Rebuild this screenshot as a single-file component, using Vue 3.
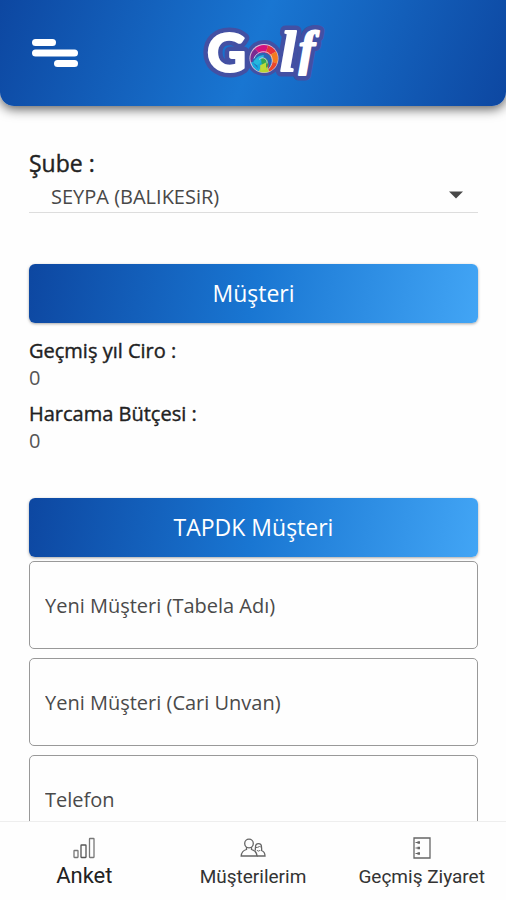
<script setup>
import { ref } from 'vue'

const branch = ref('SEYPA (BALIKESiR)')
const figures = [
  { label: 'Geçmiş yıl Ciro :', value: '0' },
  { label: 'Harcama Bütçesi :', value: '0' },
]
const fields = ref([
  { id: 'tabela', label: 'Yeni Müşteri (Tabela Adı)', type: 'text', value: '' },
  { id: 'unvan', label: 'Yeni Müşteri (Cari Unvan)', type: 'text', value: '' },
  { id: 'telefon', label: 'Telefon', type: 'tel', value: '' },
])
</script>

<template>
  <div class="app">
    <header class="header">
      <button class="menu" type="button" aria-label="Menü">
        <svg width="46" height="28" viewBox="0 0 46 28" fill="#fff">
          <rect x="0" y="0" width="24" height="7" rx="3.5" />
          <rect x="0" y="10.5" width="46" height="7" rx="3.5" />
          <rect x="22" y="21" width="24" height="7" rx="3.5" />
        </svg>
      </button>
      <svg class="logo" width="170" height="100" viewBox="0 0 170 100" role="img" aria-label="Golf">
        <g class="halo">
          <text class="round" x="39" y="69">G</text>
          <circle cx="96" cy="55" r="16" />
          <text class="script tall" x="112" y="68">l</text>
          <text class="script" x="131" y="62">f</text>
        </g>
        <g fill="#fff" stroke="#fff" stroke-width="2" stroke-linejoin="round">
          <text class="round" x="39" y="69">G</text>
          <text class="script tall" x="112" y="68">l</text>
          <text class="script" x="131" y="62">f</text>
        </g>
        <circle cx="96" cy="55.5" r="14.5" fill="#d9c3dc" />
        <g transform="translate(96 55.5)">
          <path d="M0 0L-13 4A14 14 0 0 1-9-10z" fill="#7b2a91" />
          <path d="M0 0L-9-10A14 14 0 0 1 4-13z" fill="#d3127e" />
          <path d="M0 0L4-13A14 14 0 0 1 12-7z" fill="#e8323a" />
          <path d="M0 0L12-7A14 14 0 0 1 13 5z" fill="#f47b20" />
          <path d="M0 0L13 5A14 14 0 0 1 5 13z" fill="#e9472c" />
          <path d="M0 0L5 13A14 14 0 0 1-5 13z" fill="#b8d433" />
          <path d="M0 0L-5 13A14 14 0 0 1-13 4z" fill="#16a9df" />
          <path d="M-12 3C-10-6 1-9 6-3C10 2 8 8 4 11C6 4 3-1-3 0C-7 1-8 5-6 10z" fill="#2b65b5" />
          <path d="M-11 4C-8-1-4-4 0-3L-2 3L-7 7z" fill="#24b8dd" />
          <path d="M-3 0C3-2 6 3 3 9L-2 8z" fill="#36a853" />
          <path d="M-4 7L2 4L2 11L-3 12z" fill="#c1dc3a" />
          <path d="M-10 0C-7-8 3-9 7-3C10 3 7 8 4 11M-5 1C-1-3 4 1 3 5" fill="none" stroke="#e8dcec" stroke-width="0.8" />
        </g>
      </svg>
    </header>

    <main class="content">
      <div class="branch">
        <label class="branch-label" for="branch">Şube :</label>
        <div class="select-wrap">
          <select id="branch" v-model="branch">
            <option>SEYPA (BALIKESiR)</option>
          </select>
          <svg width="14" height="8" viewBox="0 0 14 8"><path d="M0 0.5H14L7 7.5z" fill="#484848" /></svg>
        </div>
      </div>

      <button class="banner" type="button">Müşteri</button>
      <dl class="figures">
        <div v-for="f in figures" :key="f.label" class="figure">
          <dt>{{ f.label }}</dt>
          <dd>{{ f.value }}</dd>
        </div>
      </dl>

      <button class="banner" type="button">TAPDK Müşteri</button>
      <form class="fields" @submit.prevent>
        <input
          v-for="f in fields"
          :id="f.id"
          :key="f.id"
          v-model="f.value"
          :type="f.type"
          :placeholder="f.label"
          :aria-label="f.label"
        />
      </form>
    </main>

    <nav class="tabs">
      <a class="tab active" href="#anket">
        <svg width="24" height="24" viewBox="0 0 24 24" fill="none" stroke="#777" stroke-width="1.3">
          <rect x="2" y="14.5" width="4" height="7" rx="0.5" />
          <rect x="9" y="9" width="5" height="12.5" rx="0.5" stroke="#555" />
          <rect x="17.5" y="2.5" width="4.5" height="19" rx="0.5" />
        </svg>
        <span>Anket</span>
      </a>
      <a class="tab" href="#musterilerim">
        <svg width="26" height="24" viewBox="0 0 26 24" fill="none" stroke="#666" stroke-width="1.3">
          <circle cx="9" cy="7.5" r="4.3" />
          <path d="M6.5 11V13.5C3 14.5 1.5 16 1.2 20H17C16.8 16 15 14.5 11.5 13.5V11" />
          <path d="M15.5 14.5C15 13 15.5 12.5 15.5 11C15.5 6.5 21.5 6.5 21.5 11C21.5 12.5 22 13 21.5 14.5C24 15.5 25 17 25 20H17" />
          <path d="M16 11.5C18 11.5 19 11 19.5 10L21 11.5M17 14C17.5 15.5 19.5 15.5 20 14" stroke-width="1" />
        </svg>
        <span>Müşterilerim</span>
      </a>
      <a class="tab" href="#ziyaret">
        <svg width="24" height="24" viewBox="0 0 24 24" fill="none" stroke="#666" stroke-width="1.3">
          <path d="M4 2H20V22H4z" />
          <path d="M5.5 6.5H9.5M5.5 12H9.5M5.5 17.5H9.5" stroke-width="1" />
          <path d="M7.5 6.5H10M7.5 12H10M7.5 17.5H10" stroke-width="2.5" />
        </svg>
        <span>Geçmiş Ziyaret</span>
      </a>
    </nav>
  </div>
</template>

<style>
body {
  margin: 0;
  background: #fefefe;
}
</style>

<style scoped>
.app {
  display: flex;
  flex-direction: column;
  height: 100vh;
  font-family: "Open Sans", "Noto Sans", sans-serif;
  color: #222;
}
.header {
  display: grid;
  grid-template-columns: 1fr auto 1fr;
  align-items: center;
  flex: none;
  height: 106px;
  padding: 0 32px;
  box-sizing: border-box;
  border-radius: 0 0 14px 14px;
  background: linear-gradient(110deg, #0d47a1, #1976d2 50%, #0d47a1);
  box-shadow: 0 3px 12px rgba(0, 0, 0, 0.65);
  z-index: 1;
}
.menu {
  justify-self: start;
  padding: 0;
  border: 0;
  background: none;
  line-height: 0;
}
.logo {
  overflow: visible;
}
.halo {
  fill: #4350a3;
  stroke: #4350a3;
  stroke-width: 11px;
  stroke-linejoin: round;
}
.halo circle {
  stroke-width: 4px;
}
.round {
  font: 900 54px Lato, sans-serif;
}
.script {
  font: italic 700 48px "Liberation Serif", serif;
}
.script.tall {
  font-size: 58px;
}
.content {
  flex: 1;
  min-height: 0;
  overflow-y: auto;
  scrollbar-width: none;
  padding: 43px 28px 0 29px;
}
.branch {
  margin-bottom: 51px;
}
.branch-label,
.figure dt {
  font-weight: 500;
  -webkit-text-stroke: 0.4px #222;
}
.branch-label {
  display: block;
  font-size: 23px;
  line-height: 28px;
}
.select-wrap {
  display: flex;
  align-items: center;
  padding-right: 15px;
  border-bottom: 1px solid #ddd;
}
select {
  flex: 1;
  height: 35px;
  margin-right: -14px;
  padding: 3px 0 0 22px;
  border: 0;
  appearance: none;
  background: none;
  font: 20px "Open Sans", sans-serif;
  color: #484848;
}
.select-wrap svg {
  pointer-events: none;
}
.banner {
  display: block;
  width: 100%;
  height: 59px;
  padding: 0 0 1px;
  border: 0;
  border-radius: 6px;
  background: linear-gradient(100deg, #0d47a1, #1976d2 50%, #42a5f5);
  box-shadow: 0 1px 3px rgba(0, 0, 0, 0.35);
  font: 23px "Open Sans", sans-serif;
  color: #fff;
}
.figures {
  margin: 14px 0 35px;
}
.figure {
  padding-bottom: 9px;
  font-size: 20px;
  line-height: 27px;
}
.figure dd {
  margin: 0;
  color: #555;
}
.fields {
  display: grid;
  gap: 9px;
  margin-top: 4px;
}
input {
  width: 100%;
  height: 88px;
  box-sizing: border-box;
  padding: 0 15px;
  border: 1px solid #999;
  border-radius: 5px;
  background: #fefefe;
  font: 20px "Open Sans", sans-serif;
  color: #222;
}
input::placeholder {
  color: #4a4a4a;
  opacity: 1;
}
.tabs {
  display: grid;
  grid-template-columns: repeat(3, 1fr);
  flex: none;
  height: 79px;
  box-sizing: border-box;
  border-top: 1px solid #eee;
  background: #fefefe;
}
.tab {
  display: flex;
  flex-direction: column;
  align-items: center;
  padding-top: 14px;
  font: 19px/34px Roboto, sans-serif;
  color: #333;
  text-decoration: none;
  white-space: nowrap;
}
.tab.active {
  font-size: 22px;
  line-height: 32px;
  color: #222;
}
</style>
